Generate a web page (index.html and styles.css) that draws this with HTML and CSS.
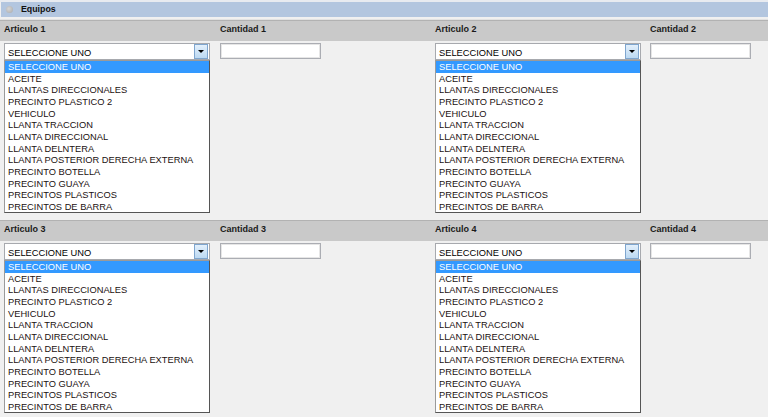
FILE: index.html
```html
<!DOCTYPE html>
<html>
<head>
<meta charset="utf-8">
<link rel="stylesheet" href="styles.css">
</head>
<body>
<div class="top"></div>
<div class="panel-head"><span class="dot"></span><span class="title">Equipos</span></div>
<div class="gap"></div>

<section class="block">
  <div class="heads">
    <div class="h">Articulo 1</div><div class="h">Cantidad 1</div><div class="h">Articulo 2</div><div class="h">Cantidad 2</div>
  </div>
  <div class="cells">
    <div class="cell">
      <div class="combo"><span class="val">SELECCIONE UNO</span><span class="btn"><span class="tri"></span></span></div>
      <div class="list">
        <div class="item sel">SELECCIONE UNO</div>
        <div class="item">ACEITE</div>
        <div class="item">LLANTAS DIRECCIONALES</div>
        <div class="item">PRECINTO PLASTICO 2</div>
        <div class="item">VEHICULO</div>
        <div class="item">LLANTA TRACCION</div>
        <div class="item">LLANTA DIRECCIONAL</div>
        <div class="item">LLANTA DELNTERA</div>
        <div class="item">LLANTA POSTERIOR DERECHA EXTERNA</div>
        <div class="item">PRECINTO BOTELLA</div>
        <div class="item">PRECINTO GUAYA</div>
        <div class="item">PRECINTOS PLASTICOS</div>
        <div class="item">PRECINTOS DE BARRA</div>
      </div>
    </div>
    <div class="cell"><div class="input"></div></div>
    <div class="cell">
      <div class="combo"><span class="val">SELECCIONE UNO</span><span class="btn"><span class="tri"></span></span></div>
      <div class="list">
        <div class="item sel">SELECCIONE UNO</div>
        <div class="item">ACEITE</div>
        <div class="item">LLANTAS DIRECCIONALES</div>
        <div class="item">PRECINTO PLASTICO 2</div>
        <div class="item">VEHICULO</div>
        <div class="item">LLANTA TRACCION</div>
        <div class="item">LLANTA DIRECCIONAL</div>
        <div class="item">LLANTA DELNTERA</div>
        <div class="item">LLANTA POSTERIOR DERECHA EXTERNA</div>
        <div class="item">PRECINTO BOTELLA</div>
        <div class="item">PRECINTO GUAYA</div>
        <div class="item">PRECINTOS PLASTICOS</div>
        <div class="item">PRECINTOS DE BARRA</div>
      </div>
    </div>
    <div class="cell"><div class="input"></div></div>
  </div>
</section>

<section class="block">
  <div class="heads">
    <div class="h">Articulo 3</div><div class="h">Cantidad 3</div><div class="h">Articulo 4</div><div class="h">Cantidad 4</div>
  </div>
  <div class="cells">
    <div class="cell">
      <div class="combo"><span class="val">SELECCIONE UNO</span><span class="btn"><span class="tri"></span></span></div>
      <div class="list">
        <div class="item sel">SELECCIONE UNO</div>
        <div class="item">ACEITE</div>
        <div class="item">LLANTAS DIRECCIONALES</div>
        <div class="item">PRECINTO PLASTICO 2</div>
        <div class="item">VEHICULO</div>
        <div class="item">LLANTA TRACCION</div>
        <div class="item">LLANTA DIRECCIONAL</div>
        <div class="item">LLANTA DELNTERA</div>
        <div class="item">LLANTA POSTERIOR DERECHA EXTERNA</div>
        <div class="item">PRECINTO BOTELLA</div>
        <div class="item">PRECINTO GUAYA</div>
        <div class="item">PRECINTOS PLASTICOS</div>
        <div class="item">PRECINTOS DE BARRA</div>
      </div>
    </div>
    <div class="cell"><div class="input"></div></div>
    <div class="cell">
      <div class="combo"><span class="val">SELECCIONE UNO</span><span class="btn"><span class="tri"></span></span></div>
      <div class="list">
        <div class="item sel">SELECCIONE UNO</div>
        <div class="item">ACEITE</div>
        <div class="item">LLANTAS DIRECCIONALES</div>
        <div class="item">PRECINTO PLASTICO 2</div>
        <div class="item">VEHICULO</div>
        <div class="item">LLANTA TRACCION</div>
        <div class="item">LLANTA DIRECCIONAL</div>
        <div class="item">LLANTA DELNTERA</div>
        <div class="item">LLANTA POSTERIOR DERECHA EXTERNA</div>
        <div class="item">PRECINTO BOTELLA</div>
        <div class="item">PRECINTO GUAYA</div>
        <div class="item">PRECINTOS PLASTICOS</div>
        <div class="item">PRECINTOS DE BARRA</div>
      </div>
    </div>
    <div class="cell"><div class="input"></div></div>
  </div>
</section>
</body>
</html>
```

FILE: styles.css
```css
html, body {
  margin: 0;
  padding: 0;
}
body {
  background: #f0f0f0;
  font-family: "Liberation Sans", Arial, sans-serif;
  color: #111;
  overflow: hidden;
  width: 768px;
  height: 417px;
}
.top {
  height: 2px;
  background: #e8ebf0;
}
.panel-head {
  height: 15px;
  margin-left: 1px;
  background: #b3c6df;
  display: flex;
  align-items: center;
}
.dot {
  width: 7px;
  height: 7px;
  border-radius: 50%;
  margin-left: 5px;
  background: radial-gradient(circle at 40% 40%, #d6d6d6, #a9a9a9);
}
.title {
  font-weight: bold;
  font-size: 8.8px;
  line-height: 15px;
  margin-left: 8px;
  color: #111;
}
.gap {
  height: 2px;
  border-bottom: 1px solid #e2e2e2;
}
.block {
  height: 200px;
  width: 768px;
  overflow: hidden;
}
.heads {
  display: grid;
  grid-template-columns: 216px 215px 215px 1fr;
  height: 20px;
  border-top: 1px solid #b2b2b2;
  background: #c9c9c9;
}
.h {
  font-weight: bold;
  font-size: 9px;
  line-height: 12px;
  padding: 2px 0 0 4px;
  color: #1a1a1a;
}
.cells {
  display: grid;
  grid-template-columns: 216px 215px 215px 1fr;
  padding-top: 2px;
}
.cell {
  padding-left: 4px;
}
.combo {
  width: 206px;
  height: 17px;
  box-sizing: border-box;
  border: 1px solid #a7a9ae;
  background: #fff;
  display: flex;
  align-items: stretch;
}
.val {
  flex: 1;
  font-size: 9.3px;
  line-height: 15px;
  padding: 2px 0 0 3px;
  box-sizing: border-box;
  color: #000;
}
.btn {
  width: 14px;
  box-sizing: border-box;
  border: 1px solid #7fa6cf;
  background: linear-gradient(#e3f0fc, #bcd9f2);
  display: flex;
  align-items: center;
  justify-content: center;
  margin-right: 1px;
}
.tri {
  width: 0;
  height: 0;
  border-left: 3px solid transparent;
  border-right: 3px solid transparent;
  border-top: 3px solid #000;
}
.list {
  width: 206px;
  height: 153px;
  box-sizing: border-box;
  border: 1px solid;
  border-color: #9a9a9a #555 #555 #9a9a9a;
  background: #fff;
  overflow: hidden;
}
.item {
  height: 11.67px;
  box-sizing: border-box;
  padding: 1px 0 0 3px;
  font-size: 9.3px;
  line-height: 11.67px;
  color: #1a1010;
  white-space: nowrap;
}
.item.sel {
  background: #3399ff;
  color: #fff;
}
.input {
  width: 101px;
  height: 16px;
  box-sizing: border-box;
  border: 1px solid #abadb3;
  box-shadow: inset 0 0 0 1px #e6e6e6;
  background: #fff;
}
```
